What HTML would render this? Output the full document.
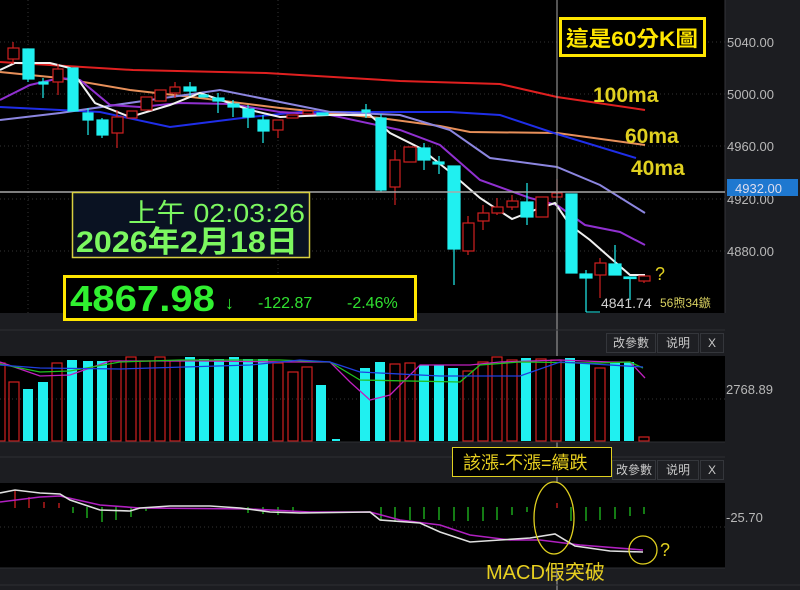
<!DOCTYPE html>
<html><head><meta charset="utf-8">
<style>
html,body{margin:0;padding:0;background:#1c1d21;}
body{width:800px;height:590px;overflow:hidden;position:relative;font-family:"Liberation Sans","Noto Sans CJK TC",sans-serif;}
svg{position:absolute;left:0;top:0;}
.ax{font-family:"Liberation Sans Narrow","Liberation Sans",sans-serif;font-size:13px;fill:#b8b8b8;}
.btn{position:absolute;height:18px;background:#1e1f23;border:1px solid #34363b;color:#c8c8c8;font-size:12px;line-height:18px;text-align:center;font-family:"Liberation Sans","Noto Sans CJK SC",sans-serif;}
</style></head><body>
<svg width="800" height="590" viewBox="0 0 800 590">
<rect x="0" y="0" width="725" height="313" fill="#000"/>
<rect x="725" y="0" width="75" height="313" fill="#1c1d21"/>
<line x1="725" y1="0" x2="725" y2="313" stroke="#33353a"/>
<g stroke="#333" stroke-dasharray="1,3">
<line x1="0" y1="42" x2="725" y2="42"/><line x1="0" y1="94" x2="725" y2="94"/><line x1="0" y1="146" x2="725" y2="146"/><line x1="0" y1="199" x2="725" y2="199"/><line x1="0" y1="251" x2="725" y2="251"/>
<line x1="28" y1="0" x2="28" y2="313"/><line x1="278" y1="0" x2="278" y2="313"/>
</g>
<g class="ax"><text x="727" y="47">5040.00</text><text x="727" y="99">5000.00</text><text x="727" y="151">4960.00</text><text x="727" y="204">4920.00</text><text x="727" y="256">4880.00</text></g>
<g fill="none" stroke-width="2">
<polyline stroke="#e02020" points="0,62 133,70 266,73 400,81 500,84 557,97 645,110"/>
<polyline stroke="#e8905a" points="0,72 60,78 130,90 200,98 280,108 380,118 440,126 470,132 557,133 645,145"/>
<polyline stroke="#1f2ee8" points="0,107 100,112 170,127 250,117 300,112 400,112 450,112 500,115 557,134 636,158"/>
<polyline stroke="#8c86e0" points="0,120 60,113 150,100 220,90 280,102 330,112 400,115 450,130 490,158 557,167 600,185 645,213"/>
<polyline stroke="#9030d0" points="0,100 30,85 60,78 80,80 110,105 140,107 180,103 230,104 280,112 330,115 400,130 440,145 480,180 530,198 557,205 585,225 620,232 645,245"/>
<polyline stroke="#f0f0f0" points="0,70 15,63 50,63 70,68 95,103 130,117 170,105 200,93 250,110 280,117 330,115 370,115 390,133 420,148 450,172 480,198 512,219 540,208 555,203 570,225 590,240 615,262 630,275 645,275"/>
</g>
<g stroke="#d02020" fill="#000" stroke-width="1.2">
<line x1="13" y1="42" x2="13" y2="64"/><rect x="8" y="48" width="11" height="11"/>
<line x1="58" y1="64" x2="58" y2="95"/><rect x="53" y="69" width="10" height="13"/>
<line x1="117" y1="110" x2="117" y2="148"/><rect x="112" y="117" width="11" height="16"/>
<rect x="127" y="111" width="10" height="7"/>
<rect x="141" y="97" width="11" height="13"/>
<rect x="155" y="90" width="11" height="11"/>
<line x1="175" y1="82" x2="175" y2="98"/><rect x="170" y="87" width="10" height="6"/>
<rect x="273" y="120" width="10" height="10"/><line x1="278" y1="130" x2="278" y2="138"/>
<rect x="287" y="115" width="11" height="3"/>
<rect x="303" y="111" width="10" height="3"/>
<line x1="395" y1="150" x2="395" y2="205"/><rect x="390" y="160" width="10" height="27"/>
<rect x="404" y="147" width="12" height="15"/>
<line x1="468" y1="216" x2="468" y2="255"/><rect x="463" y="223" width="11" height="28"/>
<line x1="483" y1="205" x2="483" y2="230"/><rect x="478" y="213" width="11" height="8"/>
<line x1="497" y1="198" x2="497" y2="215"/><rect x="492" y="207" width="11" height="6"/>
<line x1="512" y1="195" x2="512" y2="210"/><rect x="507" y="201" width="11" height="6"/>
<rect x="536" y="197" width="12" height="20"/>
<line x1="557" y1="179" x2="557" y2="197"/><rect x="552" y="193" width="10" height="4"/>
<line x1="600" y1="258" x2="600" y2="298"/><rect x="595" y="263" width="11" height="12"/>
<rect x="639" y="276" width="11" height="5"/><line x1="644" y1="281" x2="644" y2="283"/>
</g>
<g stroke="#20f0f0" fill="#20f0f0" stroke-width="1.2">
<rect x="23" y="49" width="11" height="30"/><line x1="28" y1="79" x2="28" y2="82"/>
<line x1="43" y1="78" x2="43" y2="98"/><rect x="39" y="82" width="9" height="2"/>
<rect x="68" y="68" width="10" height="43"/>
<line x1="88" y1="108" x2="88" y2="135"/><rect x="83" y="113" width="10" height="7"/>
<line x1="102" y1="118" x2="102" y2="138"/><rect x="97" y="120" width="11" height="15"/>
<line x1="190" y1="82" x2="190" y2="96"/><rect x="184" y="87" width="12" height="4"/>
<rect x="199" y="95" width="9" height="2"/>
<line x1="218" y1="93" x2="218" y2="113"/><rect x="213" y="98" width="11" height="3"/>
<line x1="233" y1="100" x2="233" y2="117"/><rect x="228" y="104" width="11" height="3"/>
<line x1="248" y1="105" x2="248" y2="128"/><rect x="243" y="109" width="11" height="8"/>
<line x1="263" y1="115" x2="263" y2="143"/><rect x="258" y="120" width="11" height="11"/>
<rect x="317" y="113" width="11" height="2"/>
<line x1="366" y1="104" x2="366" y2="118"/><rect x="362" y="110" width="8" height="2"/>
<line x1="381" y1="114" x2="381" y2="192"/><rect x="376" y="118" width="10" height="72"/>
<line x1="424" y1="143" x2="424" y2="170"/><rect x="418" y="148" width="12" height="12"/>
<line x1="439" y1="156" x2="439" y2="174"/><rect x="433" y="162" width="11" height="2"/>
<line x1="454" y1="166" x2="454" y2="285"/><rect x="448" y="166" width="12" height="83"/>
<line x1="527" y1="183" x2="527" y2="225"/><rect x="521" y="202" width="12" height="15"/>
<rect x="566" y="194" width="11" height="79"/>
<line x1="586" y1="270" x2="586" y2="312"/><rect x="580" y="274" width="12" height="4"/>
<line x1="615" y1="245" x2="615" y2="275"/><rect x="609" y="264" width="12" height="11"/>
<line x1="630" y1="277" x2="630" y2="300"/><rect x="624" y="277" width="12" height="1.5"/>
</g>
<line x1="586" y1="312" x2="600" y2="312" stroke="#20f0f0"/>
<line x1="0" y1="192" x2="725" y2="192" stroke="#a8a8a8" stroke-width="1.5"/>
<line x1="557" y1="0" x2="557" y2="590" stroke="#a8a8a8" stroke-width="1"/>
<rect x="727" y="179" width="71" height="17" fill="#1e78d0"/>
<text x="735" y="193" class="ax" style="fill:#dde">4932.00</text>
<rect x="560.5" y="18.5" width="144" height="37" fill="#000" stroke="#ffe600" stroke-width="3"/>
<text x="566" y="46" font-size="21" font-weight="bold" fill="#ffe600" textLength="132" lengthAdjust="spacingAndGlyphs">這是60分K圖</text>
<g font-size="21" font-weight="bold" fill="#e0d020"><text x="593" y="102">100ma</text><text x="625" y="143">60ma</text><text x="631" y="175">40ma</text></g>
<text x="655" y="280" font-size="18" fill="#e0d020">?</text>
<text x="601" y="308" font-size="14" fill="#d0d0d0" font-family="Liberation Sans Narrow,Liberation Sans">4841.74</text>
<text x="660" y="307" font-size="12" fill="#d8d060">56煦34鏃</text>
<rect x="72.5" y="192.5" width="237" height="65" fill="#0a1222" stroke="#d8d040" stroke-width="1.5"/>
<text x="128" y="222" font-size="26" fill="#7cf860" textLength="177" lengthAdjust="spacingAndGlyphs">上午 02:03:26</text>
<text x="76" y="252" font-size="30" font-weight="bold" fill="#7cf860" textLength="222" lengthAdjust="spacingAndGlyphs">2026年2月18日</text>
<rect x="64.5" y="276.5" width="351" height="43" fill="#000" stroke="#ffe600" stroke-width="3"/>
<text x="70" y="311" font-size="36" font-weight="bold" fill="#30f030" textLength="145" lengthAdjust="spacingAndGlyphs">4867.98</text>
<text x="225" y="309" font-size="18" font-weight="bold" fill="#30f030">↓</text>
<text x="258" y="308" font-size="16" fill="#30e030">-122.87</text>
<text x="347" y="308" font-size="16" fill="#30e030">-2.46%</text>
<line x1="0" y1="330" x2="725" y2="330" stroke="#2e3034"/>
<rect x="0" y="356" width="725" height="86" fill="#000"/>
<line x1="0" y1="399" x2="725" y2="399" stroke="#333" stroke-dasharray="1,3"/>
<text x="726" y="394" class="ax">2768.89</text>
<g fill="#20f0f0">
<rect x="23" y="389" width="10" height="52"/><rect x="38" y="382" width="10" height="59"/><rect x="67" y="360" width="10" height="81"/><rect x="83" y="361" width="10" height="80"/><rect x="97" y="361" width="10" height="80"/>
<rect x="185" y="357" width="10" height="84"/><rect x="199" y="359" width="10" height="82"/><rect x="214" y="359" width="10" height="82"/><rect x="229" y="357" width="10" height="84"/><rect x="243" y="359" width="10" height="82"/><rect x="258" y="359" width="10" height="82"/>
<rect x="316" y="385" width="10" height="56"/><rect x="332" y="439" width="8" height="2"/><rect x="360" y="368" width="10" height="73"/><rect x="375" y="362" width="10" height="79"/>
<rect x="419" y="365" width="10" height="76"/><rect x="434" y="365" width="10" height="76"/><rect x="448" y="368" width="10" height="73"/><rect x="521" y="358" width="10" height="83"/><rect x="565" y="358" width="10" height="83"/><rect x="580" y="363" width="10" height="78"/><rect x="610" y="363" width="10" height="78"/><rect x="624" y="362" width="10" height="79"/>
</g>
<g fill="none" stroke="#d02020" stroke-width="1.2">
<rect x="-1" y="363" width="6" height="78"/><rect x="9" y="382" width="10" height="59"/><rect x="52" y="363" width="10" height="78"/><rect x="111" y="361" width="10" height="80"/><rect x="126" y="357" width="10" height="84"/><rect x="140" y="361" width="10" height="80"/><rect x="155" y="357" width="10" height="84"/><rect x="170" y="361" width="10" height="80"/>
<rect x="273" y="363" width="10" height="78"/><rect x="288" y="372" width="10" height="69"/><rect x="302" y="367" width="10" height="74"/><rect x="390" y="364" width="10" height="77"/><rect x="405" y="363" width="10" height="78"/><rect x="463" y="371" width="10" height="70"/><rect x="478" y="362" width="10" height="79"/><rect x="492" y="357" width="10" height="84"/><rect x="507" y="360" width="10" height="81"/><rect x="536" y="359" width="10" height="82"/><rect x="551" y="360" width="10" height="81"/><rect x="595" y="368" width="10" height="73"/><rect x="639" y="437" width="10" height="4"/>
</g>
<g fill="none" stroke-width="1.3">
<polyline stroke="#c020c0" points="0,362 40,376 70,375 110,361 200,361 290,362 330,362 350,382 370,400 390,395 420,365 470,365 500,362 560,360 610,362 630,362 645,378"/>
<polyline stroke="#20c020" points="0,364 40,372 70,371 120,362 180,360 280,360 330,362 360,380 460,382 480,365 520,362 600,363 630,362 643,368"/>
<polyline stroke="#2040e0" points="0,365 40,368 120,369 250,365 300,360 330,362 360,372 440,376 520,376 560,362 643,367"/>
</g>
<line x1="0" y1="442" x2="725" y2="442" stroke="#2e3034"/>
<line x1="0" y1="457" x2="725" y2="457" stroke="#2e3034"/>
<rect x="0" y="483" width="725" height="85" fill="#000"/>
<line x1="0" y1="527" x2="725" y2="527" stroke="#333" stroke-dasharray="1,3"/>
<text x="726" y="522" class="ax">-25.70</text>
<g stroke="#d02020" stroke-width="1.3"><line x1="15" y1="490" x2="15" y2="508"/><line x1="29" y1="497" x2="29" y2="508"/><line x1="44" y1="502" x2="44" y2="508"/><line x1="59" y1="503" x2="59" y2="508"/><line x1="557" y1="503" x2="557" y2="508"/></g>
<g stroke="#20c020" stroke-width="1.3">
<line x1="73" y1="507" x2="73" y2="513"/><line x1="87" y1="507" x2="87" y2="518"/><line x1="102" y1="507" x2="102" y2="522"/><line x1="116" y1="507" x2="116" y2="520"/><line x1="131" y1="507" x2="131" y2="517"/><line x1="146" y1="507" x2="146" y2="511"/>
<line x1="248" y1="507" x2="248" y2="513"/><line x1="263" y1="507" x2="263" y2="514"/><line x1="278" y1="507" x2="278" y2="515"/><line x1="293" y1="507" x2="293" y2="512"/>
<line x1="381" y1="507" x2="381" y2="520"/><line x1="395" y1="507" x2="395" y2="522"/><line x1="410" y1="507" x2="410" y2="520"/><line x1="424" y1="507" x2="424" y2="519"/><line x1="439" y1="507" x2="439" y2="520"/><line x1="454" y1="507" x2="454" y2="521"/><line x1="468" y1="507" x2="468" y2="521"/><line x1="483" y1="507" x2="483" y2="521"/><line x1="497" y1="507" x2="497" y2="520"/><line x1="512" y1="507" x2="512" y2="515"/><line x1="527" y1="507" x2="527" y2="512"/>
<line x1="571" y1="507" x2="571" y2="521"/><line x1="586" y1="507" x2="586" y2="521"/><line x1="600" y1="507" x2="600" y2="520"/><line x1="615" y1="507" x2="615" y2="519"/><line x1="630" y1="507" x2="630" y2="516"/><line x1="644" y1="507" x2="644" y2="514"/>
</g>
<g fill="none" stroke-width="1.6">
<polyline stroke="#b020c0" points="0,502 40,497 60,496 100,505 140,508 250,509 310,512 370,512 400,520 440,525 470,535 510,540 540,540 580,545 643,550"/>
<polyline stroke="#e0e0e0" points="0,493 15,490 40,493 60,494 70,500 100,510 130,511 140,508 170,506 210,506 240,508 270,512 300,513 370,512 380,520 420,523 440,532 470,542 500,540 530,538 555,534 575,546 610,551 643,552"/>
</g>
<line x1="0" y1="568" x2="725" y2="568" stroke="#2e3034"/>
<line x1="0" y1="585" x2="800" y2="585" stroke="#2e3034"/>
<ellipse cx="554" cy="518" rx="20" ry="36" fill="none" stroke="#e0d020" stroke-width="1.3"/>
<circle cx="643" cy="550" r="14" fill="none" stroke="#e0d020" stroke-width="1.3"/>
<text x="660" y="556" font-size="18" fill="#e0d020">?</text>
<text x="486" y="579" font-size="20" fill="#e8d020">MACD假突破</text>
<rect x="452.5" y="447.5" width="159" height="29" fill="#000" stroke="#e0d020"/>
<text x="463" y="469" font-size="18" fill="#e8d020">該漲-不漲=續跌</text>
</svg>
<div class="btn" style="left:606px;top:333px;width:48px">改參數</div>
<div class="btn" style="left:657px;top:333px;width:40px">说明</div>
<div class="btn" style="left:700px;top:333px;width:22px">X</div>
<div class="btn" style="left:612px;top:460px;width:42px">改參數</div>
<div class="btn" style="left:657px;top:460px;width:40px">说明</div>
<div class="btn" style="left:700px;top:460px;width:22px">X</div>
</body></html>
